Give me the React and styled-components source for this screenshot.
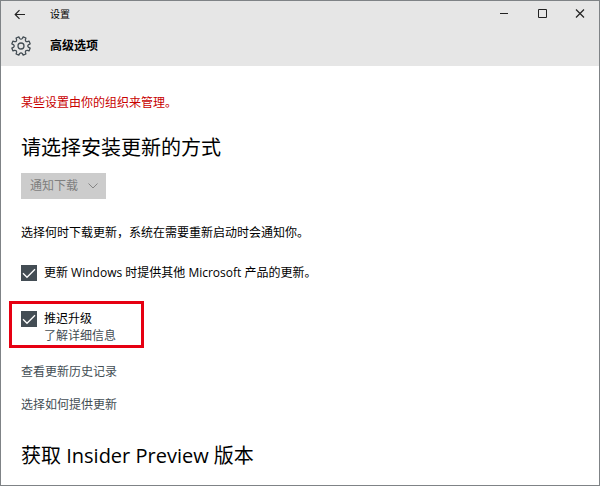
import React from 'react'
import styled, { createGlobalStyle } from 'styled-components'

const GlobalStyle = createGlobalStyle`
  * {
    box-sizing: border-box;
  }

  body {
    margin: 0;
    background: #fff;
    color: #000;
    font-family: "Open Sans", "Noto Sans CJK SC", sans-serif;
    font-size: 12px;
    line-height: 18px;
  }

  h1, h2, p {
    margin: 0;
  }
`

const Window = styled.div`
  min-height: 100vh;
  border: 1px solid #7f8386;
`

const Header = styled.header`
  padding-bottom: 1px;
  background: #e6e6e6;
`

const TitleBar = styled.div`
  display: flex;
  align-items: center;
  height: 26px;
`

const IconButton = styled.button`
  display: flex;
  align-items: center;
  justify-content: center;
  width: 38px;
  height: 26px;
  padding: 0;
  border: 0;
  background: none;
  color: #222;
`

const WindowTitle = styled.span`
  flex: 1;
  padding-left: 11px;
  font-size: 10px;
`

const PageBar = styled.div`
  display: flex;
  align-items: center;
  gap: 19px;
  height: 38px;
  padding-left: 10px;

  h1 {
    font-size: 12px;
    font-weight: bold;
  }
`

const Content = styled.main`
  display: flex;
  flex-direction: column;
  align-items: flex-start;
  padding: 28px 20px 14px;
`

const Notice = styled.p`
  color: #c80000;
`

const Heading = styled.h2`
  margin-top: ${props => props.$top};
  font-size: 20px;
  font-weight: normal;
  line-height: 28px;
`

const SelectBox = styled.div`
  display: grid;
  align-items: center;
  margin-top: 11px;

  select, svg {
    grid-area: 1 / 1;
  }

  svg {
    justify-self: end;
    margin-right: 8px;
    color: #858585;
    pointer-events: none;
  }
`

const Select = styled.select`
  appearance: none;
  height: 26px;
  padding: 0 27px 0 9px;
  border: 0;
  border-radius: 0;
  background: #ccc;
  color: #7e7e7e;
  font: inherit;
  opacity: 1;
`

const Hint = styled.p`
  margin-top: 25px;
`

const Option = styled.div`
  display: flex;
  align-items: flex-start;
  gap: 7px;
`

const PlainOption = styled(Option)`
  margin-top: 22px;
`

const MarkedOption = styled(Option)`
  width: 135px;
  margin: 19px 0 0 -12px;
  padding: 6px 9px 1px;
  border: 3px solid #e60012;
`

const CheckBox = styled.span`
  display: grid;
  margin-top: 1px;

  input, svg {
    grid-area: 1 / 1;
  }

  input {
    appearance: none;
    width: 16px;
    height: 16px;
    margin: 0;
    background: #fff;
    border: 1px solid #434d54;
  }

  input:checked {
    background: #434d54;
  }

  svg {
    color: #fff;
    pointer-events: none;
    visibility: hidden;
  }

  input:checked + svg {
    visibility: visible;
  }
`

const OptionText = styled.div`
  display: flex;
  flex-direction: column;
  line-height: 17px;
`

const TextLink = styled.a`
  color: #434d54;
  text-decoration: none;
`

const LinkList = styled.nav`
  display: flex;
  flex-direction: column;
  gap: 15px;
  margin-top: 15px;
`

const BackIcon = () => (
  <svg width="12" height="11" viewBox="0 0 12 11" fill="none" stroke="currentColor" strokeWidth="1.2">
    <path d="M11 5.5H1.5M5.5 1.2L1.2 5.5l4.3 4.3" />
  </svg>
)

const polar = (degrees, radius) => {
  const angle = degrees * Math.PI / 180
  return `${(10 + radius * Math.cos(angle)).toFixed(2)} ${(10 + radius * Math.sin(angle)).toFixed(2)}`
}

// eight teeth with rounded gaps, starting half a step off so a gap faces up
const gearPath = () => {
  const teeth = [0, 1, 2, 3, 4, 5, 6, 7].map(i => {
    const middle = 22.5 + i * 45
    return [
      `L${polar(middle - 9, 9.4)}`,
      `L${polar(middle + 9, 9.4)}`,
      `L${polar(middle + 12, 7.8)}`,
      `Q${polar(middle + 22.5, 5.9)} ${polar(middle + 33, 7.8)}`
    ].join('')
  })
  return `M${polar(10.5, 7.8)}${teeth.join('')}Z`
}

const GearIcon = () => (
  <svg width="20" height="20" viewBox="0 0 20 20" fill="none" stroke="#434d54" strokeWidth="1.3" strokeLinejoin="round">
    <path d={gearPath()} />
    <circle cx="10" cy="10" r="3" />
  </svg>
)

const Check = ({ id }) => (
  <CheckBox>
    <input type="checkbox" id={id} defaultChecked />
    <svg width="16" height="16" viewBox="0 0 16 16" fill="none" stroke="currentColor" strokeWidth="1.3">
      <path d="M2 8.3l4 4L14 4.2" />
    </svg>
  </CheckBox>
)

const App = () => (
  <>
    <GlobalStyle />
    <Window>
      <Header>
        <TitleBar>
          <IconButton type="button" aria-label="返回"><BackIcon /></IconButton>
          <WindowTitle>设置</WindowTitle>
          <IconButton type="button" aria-label="最小化">
            <svg width="10" height="10" viewBox="0 0 10 10" stroke="currentColor">
              <path d="M1 4.5h8" />
            </svg>
          </IconButton>
          <IconButton type="button" aria-label="最大化">
            <svg width="10" height="10" viewBox="0 0 10 10" fill="none" stroke="currentColor">
              <path d="M1.5 0.5h8v8h-8z" />
            </svg>
          </IconButton>
          <IconButton type="button" aria-label="关闭">
            <svg width="10" height="10" viewBox="0 0 10 10" stroke="currentColor" strokeWidth="1.2">
              <path d="M1 0.5l8 8M9 0.5l-8 8" />
            </svg>
          </IconButton>
        </TitleBar>
        <PageBar>
          <GearIcon />
          <h1>高级选项</h1>
        </PageBar>
      </Header>
      <Content>
        <Notice>某些设置由你的组织来管理。</Notice>
        <Heading $top="22px">请选择安装更新的方式</Heading>
        <SelectBox>
          <Select disabled aria-label="请选择安装更新的方式">
            <option>通知下载</option>
          </Select>
          <svg width="10" height="6" viewBox="0 0 10 6" fill="none" stroke="currentColor">
            <path d="M0.5 0.5L5 5l4.5-4.5" />
          </svg>
        </SelectBox>
        <Hint>选择何时下载更新，系统在需要重新启动时会通知你。</Hint>
        <PlainOption>
          <Check id="other-products" />
          <label htmlFor="other-products">更新 Windows 时提供其他 Microsoft 产品的更新。</label>
        </PlainOption>
        <MarkedOption>
          <Check id="defer-upgrades" />
          <OptionText>
            <label htmlFor="defer-upgrades">推迟升级</label>
            <TextLink href="#defer">了解详细信息</TextLink>
          </OptionText>
        </MarkedOption>
        <LinkList>
          <TextLink href="#history">查看更新历史记录</TextLink>
          <TextLink href="#delivery">选择如何提供更新</TextLink>
        </LinkList>
        <Heading $top="28px">获取 Insider Preview 版本</Heading>
      </Content>
    </Window>
  </>
)

export default App
